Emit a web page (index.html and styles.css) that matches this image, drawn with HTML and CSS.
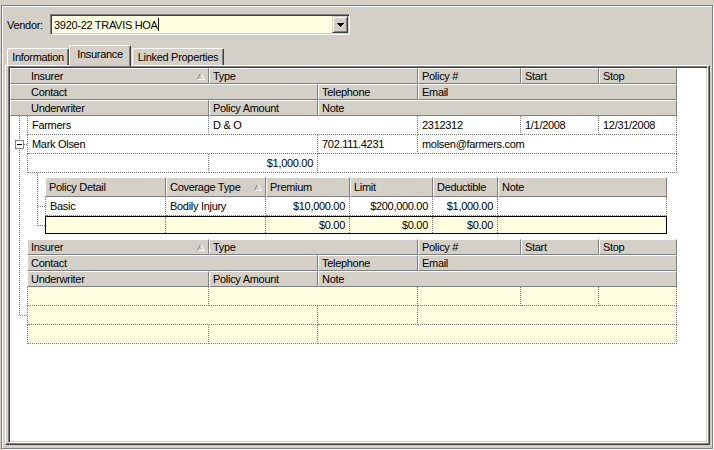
FILE: index.html
```html
<!DOCTYPE html>
<html>
<head>
<meta charset="utf-8">
<link rel="stylesheet" href="styles.css">
</head>
<body>
<div class="frame">
  <div class="vendor-row">
    <span class="vendor-label">Vendor:</span>
    <div class="combo">
      <div class="combo-text"><span>3920-22 TRAVIS HOA</span><span class="caret"></span></div>
      <div class="combo-btn">
        <svg width="7" height="4" viewBox="0 0 7 4"><rect x="0" y="0" width="7" height="1"/><rect x="1" y="1" width="5" height="1"/><rect x="2" y="2" width="3" height="1"/><rect x="3" y="3" width="1" height="1"/></svg>
      </div>
    </div>
  </div>

  <div class="tabs">
    <div class="tab t-info">Information</div>
    <div class="tab t-ins active">Insurance</div>
    <div class="tab t-link">Linked Properties</div>
  </div>

  <div class="panel">
    <div class="grid">
      <div class="grid-inner">
        <svg class="tree" width="40" height="260" viewBox="0 0 40 260">
          <g stroke="#808080" stroke-dasharray="1 1" fill="none">
            <path d="M9.5 48V248"/>
            <path d="M14 76.5H17"/>
            <path d="M10 247.5H17"/>
            <path d="M27.5 105V158"/>
            <path d="M28 138.5H35"/>
            <path d="M28 157.5H35"/>
          </g>
          <rect x="5.5" y="72.5" width="8" height="8" fill="#fff" stroke="#808080"/>
          <path d="M7 76.5H12" stroke="#000"/>
        </svg>

        <div class="hdr hdr-top">
          <div class="hrow">
            <div class="hc col-a"><span>Insurer</span><svg class="sort" width="8" height="7" viewBox="0 0 8 7"><path d="M0.5 6.5L3.5 0.5" stroke="#808080" fill="none"/><path d="M4 0.5L7.5 6.5H0.5" stroke="#fff" fill="none"/></svg></div>
            <div class="hc col-b">Type</div>
            <div class="hc col-c">Policy #</div>
            <div class="hc col-d">Start</div>
            <div class="hc col-e">Stop</div>
          </div>
          <div class="hrow">
            <div class="hc col-contact">Contact</div>
            <div class="hc col-tel">Telephone</div>
            <div class="hc col-email">Email</div>
          </div>
          <div class="hrow">
            <div class="hc col-uw">Underwriter</div>
            <div class="hc col-amt">Policy Amount</div>
            <div class="hc col-note">Note</div>
          </div>
        </div>

        <div class="rec">
          <div class="drow">
            <div class="dc col-a">Farmers</div>
            <div class="dc col-b">D &amp; O</div>
            <div class="dc col-c">2312312</div>
            <div class="dc col-d">1/1/2008</div>
            <div class="dc col-e">12/31/2008</div>
          </div>
          <div class="drow">
            <div class="dc col-contact">Mark Olsen</div>
            <div class="dc col-tel">702.111.4231</div>
            <div class="dc col-email">molsen@farmers.com</div>
          </div>
          <div class="drow">
            <div class="dc col-uw"></div>
            <div class="dc col-amt num">$1,000.00</div>
            <div class="dc col-note"></div>
          </div>
        </div>

        <div class="child">
          <div class="hrow child-head">
            <div class="hc k-detail">Policy Detail</div>
            <div class="hc k-cov"><span>Coverage Type</span><svg class="sort" width="8" height="7" viewBox="0 0 8 7"><path d="M0.5 6.5L3.5 0.5" stroke="#808080" fill="none"/><path d="M4 0.5L7.5 6.5H0.5" stroke="#fff" fill="none"/></svg></div>
            <div class="hc k-prem">Premium</div>
            <div class="hc k-limit">Limit</div>
            <div class="hc k-ded">Deductible</div>
            <div class="hc k-note">Note</div>
          </div>
          <div class="drow">
            <div class="dc k-detail">Basic</div>
            <div class="dc k-cov">Bodily Injury</div>
            <div class="dc k-prem num">$10,000.00</div>
            <div class="dc k-limit num">$200,000.00</div>
            <div class="dc k-ded num">$1,000.00</div>
            <div class="dc k-note"></div>
          </div>
          <div class="addrow">
            <div class="ac k-detail"></div>
            <div class="ac k-cov"></div>
            <div class="ac k-prem num">$0.00</div>
            <div class="ac k-limit num">$0.00</div>
            <div class="ac k-ded num">$0.00</div>
            <div class="ac k-note"></div>
          </div>
        </div>

        <div class="hdr hdr-add">
          <div class="hrow">
            <div class="hc col-a"><span>Insurer</span><svg class="sort" width="8" height="7" viewBox="0 0 8 7"><path d="M0.5 6.5L3.5 0.5" stroke="#808080" fill="none"/><path d="M4 0.5L7.5 6.5H0.5" stroke="#fff" fill="none"/></svg></div>
            <div class="hc col-b">Type</div>
            <div class="hc col-c">Policy #</div>
            <div class="hc col-d">Start</div>
            <div class="hc col-e">Stop</div>
          </div>
          <div class="hrow">
            <div class="hc col-contact">Contact</div>
            <div class="hc col-tel">Telephone</div>
            <div class="hc col-email">Email</div>
          </div>
          <div class="hrow">
            <div class="hc col-uw">Underwriter</div>
            <div class="hc col-amt">Policy Amount</div>
            <div class="hc col-note">Note</div>
          </div>
        </div>

        <div class="rec rec-new">
          <div class="drow">
            <div class="dc col-a"></div>
            <div class="dc col-b"></div>
            <div class="dc col-c"></div>
            <div class="dc col-d"></div>
            <div class="dc col-e"></div>
          </div>
          <div class="drow">
            <div class="dc col-contact"></div>
            <div class="dc col-tel"></div>
            <div class="dc col-email"></div>
          </div>
          <div class="drow">
            <div class="dc col-uw"></div>
            <div class="dc col-amt"></div>
            <div class="dc col-note"></div>
          </div>
        </div>
      </div>
    </div>
  </div>
</div>
</body>
</html>
```

FILE: styles.css
```css
html, body {
  margin: 0;
  padding: 0;
}
body {
  background: #D4D0C8;
  font-family: "Liberation Sans", Arial, sans-serif;
  font-size: 11px;
  letter-spacing: -0.3px;
  color: #000;
  width: 714px;
  height: 450px;
  overflow: hidden;
}

.frame {
  margin: 5px 0 0 1px;
  width: 712px;
  height: 444px;
  box-sizing: border-box;
  border: 1px solid #808080;
  box-shadow: 1px 1px 0 #fff, inset 1px 1px 0 #fff;
  padding: 8px 0 0 3px;
}

/* vendor */
.vendor-row {
  display: flex;
  align-items: center;
  height: 21px;
  margin-left: 2px;
}
.vendor-label {
  width: 43px;
}
.combo {
  width: 300px;
  height: 21px;
  box-sizing: border-box;
  border: 1px solid;
  border-color: #808080 #fff #fff #808080;
  box-shadow: inset 1px 1px 0 #404040, inset -1px -1px 0 #D4D0C8;
  padding: 1px;
  background: #FFFFE1;
  display: flex;
  align-items: center;
}
.combo-text {
  flex: 1;
  display: flex;
  align-items: center;
  padding-left: 2px;
  white-space: nowrap;
}
.caret {
  display: inline-block;
  width: 1px;
  height: 13px;
  background: #000;
}
.combo-btn {
  width: 16px;
  height: 17px;
  box-sizing: border-box;
  background: #D4D0C8;
  border: 1px solid;
  border-color: #D4D0C8 #404040 #404040 #D4D0C8;
  box-shadow: inset 1px 1px 0 #fff, inset -1px -1px 0 #808080;
  display: flex;
  align-items: center;
  justify-content: center;
}
.combo-btn svg {
  display: block;
  fill: #000;
}

/* tabs */
.tabs {
  display: flex;
  align-items: flex-end;
  height: 20px;
  margin: 10px 0 0 2px;
}
.tab {
  height: 17px;
  box-sizing: border-box;
  border: 1px solid;
  border-bottom: none;
  border-color: #fff #404040 transparent #fff;
  border-radius: 2px 2px 0 0;
  box-shadow: inset -1px 0 0 #808080;
  text-align: center;
  line-height: 13px;
  padding-top: 2px;
  white-space: nowrap;
  background: #D4D0C8;
}
.t-info { width: 62px; }
.t-ins { width: 62px; margin-right: 1px; }
.t-link { width: 92px; }
.tab.active {
  height: 21px;
  margin-bottom: -1px;
  position: relative;
  z-index: 1;
}

/* panel */
.panel {
  width: 705px;
  height: 380px;
  box-sizing: border-box;
  border: 1px solid;
  border-color: #fff #404040 #404040 #fff;
  box-shadow: inset -1px -1px 0 #808080;
  padding: 0 1px 1px 2px;
}
.grid {
  width: 100%;
  height: 100%;
  box-sizing: border-box;
  border: 1px solid;
  border-color: #808080 #fff #fff #808080;
  box-shadow: inset 1px 1px 0 #404040, inset -1px -1px 0 #D4D0C8;
  padding: 1px;
  background: #fff;
}
.grid-inner {
  position: relative;
}
.tree {
  position: absolute;
  left: 0;
  top: 0;
  display: block;
}

/* header cells */
.hrow {
  display: flex;
  height: 16px;
}
.hc {
  box-sizing: border-box;
  height: 100%;
  border: 1px solid;
  border-color: #fff #808080 #808080 #fff;
  background: #D4D0C8;
  padding: 0 3px;
  display: flex;
  align-items: center;
  white-space: nowrap;
  overflow: hidden;
}
.sort {
  margin-left: auto;
  margin-right: 0;
  flex: none;
  display: block;
}

/* data rows */
.drow {
  display: flex;
  height: 19px;
  border-left: 1px dotted #808080;
}
.dc {
  box-sizing: border-box;
  height: 100%;
  border-right: 1px dotted #808080;
  border-bottom: 1px dotted #808080;
  padding: 0 4px;
  display: flex;
  align-items: center;
  white-space: nowrap;
  overflow: hidden;
}
.num {
  justify-content: flex-end;
}

/* top band columns (data widths) */
.col-a, .col-uw { width: 181px; }
.col-b { width: 209px; }
.col-c { width: 103px; }
.col-d, .col-e { width: 78px; }
.col-contact { width: 290px; }
.col-tel { width: 100px; }
.col-email { width: 259px; }
.col-amt { width: 109px; }
.col-note { width: 359px; }

.hdr-top {
  width: 667px;
}
.hdr-top .col-a, .hdr-top .col-uw { width: 199px; }
.hdr-top .col-contact { width: 308px; }
.hdr-top .hrow > .hc:first-child { padding-left: 20px; }

.rec {
  margin-left: 17px;
  width: 650px;
}

.hdr-add {
  margin: 5px 0 0 17px;
  width: 650px;
}
.hdr-add .col-a, .hdr-add .col-uw { width: 182px; }
.hdr-add .col-contact { width: 291px; }

.rec-new .drow {
  background: #FFFFE1;
}

/* child band */
.child {
  margin: 4px 0 0 35px;
  width: 622px;
}
.child-head {
  height: 20px;
}
.k-detail { width: 120px; }
.k-cov { width: 100px; }
.k-prem { width: 84px; }
.k-limit { width: 83px; }
.k-ded { width: 65px; }
.k-note { width: 169px; }
.child-head .k-detail { width: 121px; }

.addrow {
  display: flex;
  height: 18px;
  box-sizing: border-box;
  border: 1px solid #000;
  background: #FFFFE1;
}
.ac {
  box-sizing: border-box;
  height: 100%;
  border-right: 1px dotted #808080;
  padding: 0 4px;
  display: flex;
  align-items: center;
  white-space: nowrap;
}
.addrow .k-note {
  width: 168px;
  border-right: none;
}
```
